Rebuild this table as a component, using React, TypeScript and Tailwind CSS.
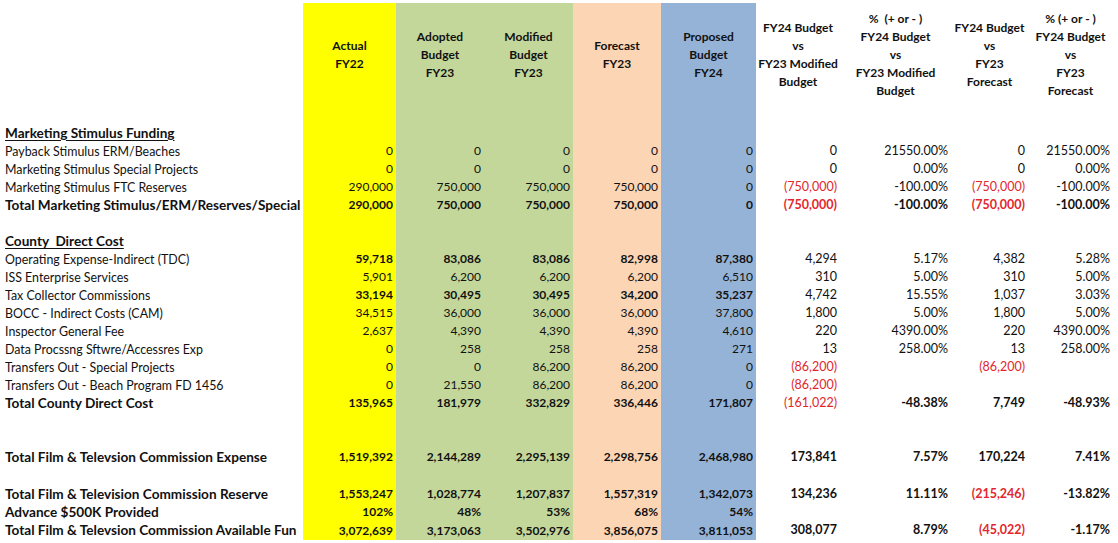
type Cell = { v: string; b?: boolean; r?: boolean }
type Row = { label?: string; kind?: 'title' | 'bold' | 'normal'; h?: string; cells?: Cell[] }

const colBg = ['bg-[#ffff00]', 'bg-[#c4d79b]', 'bg-[#c4d79b]', 'bg-[#fcd5b4]', 'bg-[#95b3d7]', '', '', '', '']
const colW = ['w-[93px]', 'w-[88px]', 'w-[89px]', 'w-[88px]', 'w-[95px]', 'w-[84px]', 'w-[111px]', 'w-[77px]', 'w-[85px]']

const headers = [
  ['Actual', 'FY22'],
  ['Adopted', 'Budget', 'FY23'],
  ['Modified', 'Budget', 'FY23'],
  ['Forecast', 'FY23'],
  ['Proposed', 'Budget', 'FY24'],
  ['FY24 Budget', 'vs', 'FY23 Modified', 'Budget'],
  ['%  (+ or - )', 'FY24 Budget', 'vs', 'FY23 Modified', 'Budget'],
  ['FY24 Budget', 'vs', 'FY23', 'Forecast'],
  ['% (+ or - )', 'FY24 Budget', 'vs', 'FY23', 'Forecast'],
]

// helper: first five bold/plain, last four bold/plain
const mk = (left: string[], right: string[], lb = false, rb = false, red: number[] = []): Cell[] => [
  ...left.map((v) => ({ v, b: lb })),
  ...right.map((v, i) => ({ v, b: rb, r: red.includes(i) })),
]

const rows: Row[] = [
  {},
  { label: 'Marketing Stimulus Funding', kind: 'title' },
  { label: 'Payback Stimulus ERM/Beaches', cells: mk(['0', '0', '0', '0', '0'], ['0', '21550.00%', '0', '21550.00%']) },
  { label: 'Marketing Stimulus Special Projects', cells: mk(['0', '0', '0', '0', '0'], ['0', '0.00%', '0', '0.00%']) },
  { label: 'Marketing Stimulus FTC Reserves', cells: mk(['290,000', '750,000', '750,000', '750,000', '0'], ['(750,000)', '-100.00%', '(750,000)', '-100.00%'], false, false, [0, 2]) },
  { label: 'Total Marketing Stimulus/ERM/Reserves/Special', kind: 'bold', cells: mk(['290,000', '750,000', '750,000', '750,000', '0'], ['(750,000)', '-100.00%', '(750,000)', '-100.00%'], true, true, [0, 2]) },
  {},
  { label: 'County  Direct Cost', kind: 'title' },
  { label: 'Operating Expense-Indirect (TDC)', cells: mk(['59,718', '83,086', '83,086', '82,998', '87,380'], ['4,294', '5.17%', '4,382', '5.28%'], true) },
  { label: 'ISS Enterprise Services', cells: mk(['5,901', '6,200', '6,200', '6,200', '6,510'], ['310', '5.00%', '310', '5.00%']) },
  { label: 'Tax Collector Commissions', cells: mk(['33,194', '30,495', '30,495', '34,200', '35,237'], ['4,742', '15.55%', '1,037', '3.03%'], true) },
  { label: 'BOCC - Indirect Costs (CAM)', cells: mk(['34,515', '36,000', '36,000', '36,000', '37,800'], ['1,800', '5.00%', '1,800', '5.00%']) },
  { label: 'Inspector General Fee', cells: mk(['2,637', '4,390', '4,390', '4,390', '4,610'], ['220', '4390.00%', '220', '4390.00%']) },
  { label: 'Data Procssng Sftwre/Accessres Exp', cells: mk(['0', '258', '258', '258', '271'], ['13', '258.00%', '13', '258.00%']) },
  { label: 'Transfers Out - Special Projects', cells: mk(['0', '0', '86,200', '86,200', '0'], ['(86,200)', '', '(86,200)', ''], false, false, [0, 2]) },
  { label: 'Transfers Out - Beach Program FD 1456', cells: mk(['0', '21,550', '86,200', '86,200', '0'], ['(86,200)', '', '', ''], false, false, [0]) },
  {
    label: 'Total County Direct Cost',
    kind: 'bold',
    cells: [
      ...mk(['135,965', '181,979', '332,829', '336,446', '171,807'], [], true),
      { v: '(161,022)', r: true },
      { v: '-48.38%', b: true },
      { v: '7,749', b: true },
      { v: '-48.93%', b: true },
    ],
  },
  {},
  {},
  { label: 'Total Film & Televsion Commission Expense', kind: 'bold', cells: mk(['1,519,392', '2,144,289', '2,295,139', '2,298,756', '2,468,980'], ['173,841', '7.57%', '170,224', '7.41%'], true, true) },
  { h: 'h-[19px]' },
  { label: 'Total Film & Television Commission Reserve', kind: 'bold', cells: mk(['1,553,247', '1,028,774', '1,207,837', '1,557,319', '1,342,073'], ['134,236', '11.11%', '(215,246)', '-13.82%'], true, true, [2]) },
  { label: 'Advance $500K Provided', kind: 'bold', cells: mk(['102%', '48%', '53%', '68%', '54%'], ['', '', '', ''], true) },
  { label: 'Total Film & Televsion Commission Available Fun', kind: 'bold', h: 'h-[19px]', cells: mk(['3,072,639', '3,173,063', '3,502,976', '3,856,075', '3,811,053'], ['308,077', '8.79%', '(45,022)', '-1.17%'], true, true, [2]) },
]

export default function App() {
  return (
    <div className="min-h-screen bg-white pt-[3px] text-[12px] text-[#111] font-[family-name:Lato,sans-serif]">
      {/* header row */}
      <div className="flex h-[103px]">
        <div className="w-[303px] shrink-0" />
        {headers.map((lines, i) => (
          <div key={i} className={`${colW[i]} ${colBg[i]} shrink-0 flex flex-col items-center justify-center text-center font-bold leading-[18px] whitespace-pre`}>
            {lines.map((l, j) => (
              <span key={j}>{l}</span>
            ))}
          </div>
        ))}
      </div>

      {rows.map((row, ri) => (
        <div key={ri} className={`flex ${row.h ?? 'h-[18px]'}`}>
          <div
            className={`w-[303px] shrink-0 pl-[5px] flex items-center overflow-hidden whitespace-pre ${
              row.kind === 'title'
                ? 'font-bold underline underline-offset-2 text-[13.6px]'
                : row.kind === 'bold'
                  ? 'font-bold text-[13.6px]'
                  : 'text-[12.4px] pt-[2px]'
            }`}
          >
            {row.label}
          </div>
          {colBg.map((bg, ci) => {
            const c = row.cells?.[ci]
            return (
              <div
                key={ci}
                className={`${colW[ci]} ${bg} shrink-0 pr-[3px] flex items-center justify-end whitespace-nowrap ${ci > 4 ? 'text-[12.5px]' : ''} ${
                  c?.b ? 'font-bold' : ''
                } ${c?.r ? 'text-[#e3262d]' : ''}`}
              >
                {c?.v}
              </div>
            )
          })}
        </div>
      ))}
    </div>
  )
}
